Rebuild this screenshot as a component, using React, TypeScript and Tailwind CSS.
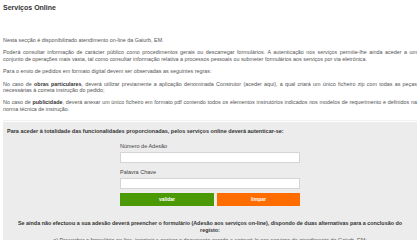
import React from 'react';

const font = { fontFamily: '"Liberation Sans", Arial, sans-serif' };

const Field = ({ label }: { label: string }) => (
  <div className="flex flex-col">
    <label className="text-[5.5px] leading-[7px] text-[#444]">{label}</label>
    <input className="mt-[2px] h-[11px] w-full bg-white border border-[#d4d4d4] outline-none" />
  </div>
);

export default function App() {
  return (
    <div style={font} className="w-[420px] h-[240px] overflow-hidden bg-white text-[#555]">
      <div className="px-[3px] pt-[4px]">
        <h1 className="text-[7px] leading-[8px] font-bold text-[#333]">Serviços Online</h1>

        <div className="mt-[25px] text-[5.4px] leading-[6.4px] text-justify flex flex-col gap-[6px]">
          <p>Nesta secção é disponibilizado atendimento on-line da Gaiurb, EM.</p>
          <p>
            Poderá consultar informação de carácter público como procedimentos gerais ou descarregar formulários. A
            autenticação nos serviços permite-lhe ainda aceder a um conjunto de operações mais vasta, tal como consultar
            informação relativa a processos pessoais ou submeter formulários aos serviços por via eletrónica.
          </p>
          <p>Para o envio de pedidos em formato digital devem ser observadas as seguintes regras:</p>
          <p>
            No caso de <b className="text-[#333]">obras particulares</b>, deverá utilizar previamente a aplicação
            denominada Construtor (aceder aqui), a qual criará um único ficheiro zip com todas as peças necessárias à
            correta instrução do pedido;
          </p>
          <p>
            No caso de <b className="text-[#333]">publicidade</b>, deverá anexar um único ficheiro em formato pdf contendo
            todos os elementos instrutórios indicados nos modelos de requerimento e definidos na norma técnica de
            instrução.
          </p>
        </div>

        <div className="mt-[8px] border-t border-[#f0f0f0] pt-[1px]">
          <div className="bg-[#ececec] px-[4px] pt-[6px] pb-[8px]">
            <p className="text-[5.5px] leading-[7px] font-bold text-[#333]">
              Para aceder à totalidade das funcionalidades proporcionadas, pelos serviços online deverá autenticar-se:
            </p>

            <div className="mx-auto mt-[8px] w-[180px] flex flex-col gap-[6px]">
              <Field label="Número de Adesão" />
              <Field label="Palavra Chave" />
              <div className="-mt-[2px] flex gap-[3px]">
                <button className="h-[13px] w-[94px] bg-[#4b9a05] text-white text-[5px] font-bold">validar</button>
                <button className="h-[13px] flex-1 bg-[#ff6c00] text-white text-[5px] font-bold">limpar</button>
              </div>
            </div>

            <p className="mt-[14px] px-[8px] text-center text-[5.4px] leading-[6.4px] font-bold text-[#333]">
              Se ainda não efectuou a sua adesão deverá preencher o formulário (Adesão aos serviços on-line), dispondo de
              duas alternativas para a conclusão do registo:
            </p>
            <p className="mt-[4px] px-[8px] text-center text-[5.4px] leading-[6.4px]">
              a) Preencher o formulário on-line, imprimir e assinar o documento gerado e entregá-lo nos serviços de
              atendimento da Gaiurb, EM;
            </p>
          </div>
        </div>
      </div>
    </div>
  );
}
